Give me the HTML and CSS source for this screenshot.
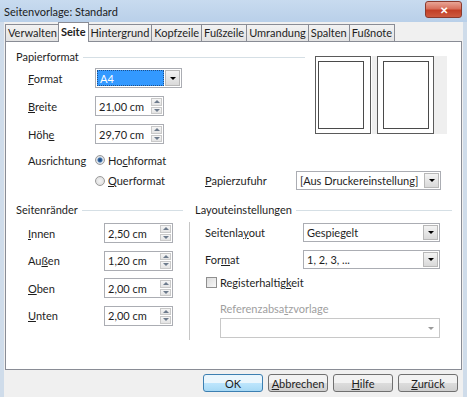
FILE: index.html
```html
<!DOCTYPE html>
<html lang="de">
<head>
    <meta charset="UTF-8">
    <meta name="viewport" content="width=device-width, initial-scale=1.0">
    <title>Seitenvorlage: Standard</title>
    <link rel="stylesheet" href="styles.css">
</head>
<body>
<div class="window">
    <div class="titlebar">
        <span class="title">Seitenvorlage: Standard</span>
        <span class="close">&#10005;</span>
    </div>
    <div class="client">
        <div class="tabs">
            <div class="tab">Verwalten</div>
            <div class="tab active">Seite</div>
            <div class="tab">Hintergrund</div>
            <div class="tab">Kopfzeile</div>
            <div class="tab">Fußzeile</div>
            <div class="tab">Umrandung</div>
            <div class="tab">Spalten</div>
            <div class="tab">Fußnote</div>
        </div>
        <div class="panel">
            <div class="top">
                <div class="paper">
                    <div class="group-head"><span>Papierformat</span></div>
                    <div class="row r1">
                        <span class="lbl"><u>F</u>ormat</span>
                        <div class="select focus w87"><span class="val">A4</span><span class="drop"></span></div>
                    </div>
                    <div class="row">
                        <span class="lbl"><u>B</u>reite</span>
                        <div class="spin"><span class="val">21,00 cm</span><span class="spin-btn"><i class="up"></i><i class="down"></i></span></div>
                    </div>
                    <div class="row">
                        <span class="lbl">Höh<u>e</u></span>
                        <div class="spin"><span class="val">29,70 cm</span><span class="spin-btn"><i class="up"></i><i class="down"></i></span></div>
                    </div>
                    <div class="row small">
                        <span class="lbl">Ausrichtung</span>
                        <span class="radio on"></span><span>Ho<u>c</u>hformat</span>
                    </div>
                </div>
                <div class="preview">
                    <div class="page left"><div class="area"></div></div>
                    <div class="page right"><div class="area"></div></div>
                </div>
            </div>
            <div class="row quer">
                <span class="lbl"></span>
                <span class="radio-cell"><span class="radio"></span><span><u>Q</u>uerformat</span></span>
                <span class="lbl2"><u>P</u>apierzufuhr</span>
                <div class="select w145"><span class="val">[Aus Druckereinstellung]</span><span class="drop"></span></div>
            </div>
            <div class="heads">
                <div class="group-head margins-head"><span>Seitenränder</span></div>
                <div class="group-head layout-head"><span>Layouteinstellungen</span></div>
            </div>
            <div class="bottom">
                <div class="margins">
                    <div class="row">
                        <span class="lbl wide"><u>I</u>nnen</span>
                        <div class="spin"><span class="val">2,50 cm</span><span class="spin-btn"><i class="up"></i><i class="down"></i></span></div>
                    </div>
                    <div class="row">
                        <span class="lbl wide">Au<u>ß</u>en</span>
                        <div class="spin"><span class="val">1,20 cm</span><span class="spin-btn"><i class="up"></i><i class="down"></i></span></div>
                    </div>
                    <div class="row">
                        <span class="lbl wide"><u>O</u>ben</span>
                        <div class="spin"><span class="val">2,00 cm</span><span class="spin-btn"><i class="up"></i><i class="down"></i></span></div>
                    </div>
                    <div class="row">
                        <span class="lbl wide"><u>U</u>nten</span>
                        <div class="spin"><span class="val">2,00 cm</span><span class="spin-btn"><i class="up"></i><i class="down"></i></span></div>
                    </div>
                </div>
                <div class="sep"></div>
                <div class="layout">
                    <div class="row">
                        <span class="lbl3">Seitenla<u>y</u>out</span>
                        <div class="select w137"><span class="val">Gespiegelt</span><span class="drop"></span></div>
                    </div>
                    <div class="row">
                        <span class="lbl3">For<u>m</u>at</span>
                        <div class="select w137"><span class="val">1, 2, 3, ...</span><span class="drop"></span></div>
                    </div>
                    <div class="check-row">
                        <span class="check"></span><span>Registerhaltig<u>k</u>eit</span>
                    </div>
                    <div class="ref">
                        <div class="ref-label">Referenzabsa<u>t</u>zvorlage</div>
                        <div class="select disabled w220"><span class="val"></span><span class="drop"></span></div>
                    </div>
                </div>
            </div>
        </div>
        <div class="buttons">
            <button class="btn default">OK</button>
            <button class="btn"><u>A</u>bbrechen</button>
            <button class="btn"><u>H</u>ilfe</button>
            <button class="btn"><u>Z</u>urück</button>
        </div>
    </div>
</div>
</body>
</html>
```

FILE: styles.css
```css
body{
    margin: 0;
    padding: 0;
    font-family: Lato, "Liberation Sans", sans-serif;
    font-size: 11px;
    color: #1e1e1e;
    background-color: #cfdcea;
}
u{
    text-decoration: underline;
    text-underline-offset: 1px;
}
.window{
    width: 467px;
    height: 397px;
    display: flex;
    flex-direction: column;
    overflow: hidden;
}
.titlebar{
    height: 22px;
    display: flex;
    align-items: center;
    justify-content: space-between;
    padding-left: 4px;
    padding-right: 5px;
    background: linear-gradient(#c8dbef, #b9d0e9);
}
.title{
    font-size: 11px;
    color: #1b1b1b;
}
.close{
    width: 35px;
    height: 15px;
    border: 1px solid #8a3a2e;
    border-radius: 3px;
    background: linear-gradient(#e8a596, #d8705c 45%, #c23f26 55%, #cd5a3f);
    color: #fff;
    font-size: 10px;
    font-weight: bold;
    display: flex;
    align-items: center;
    justify-content: center;
    margin-top: -3px;
}
.client{
    flex: 1;
    margin: 0 4px;
    background-color: #f0f0f0;
    display: flex;
    flex-direction: column;
}
.tabs{
    height: 19px;
    display: flex;
    align-items: flex-end;
    padding-left: 1px;
}
.tab{
    height: 16px;
    line-height: 16px;
    padding: 0 2px;
    border: 1px solid #898c95;
    border-bottom: none;
    margin-right: -1px;
    background: linear-gradient(#f2f2f2, #e3e3e3);
}
.tab.active{
    height: 19px;
    line-height: 18px;
    background: #fff;
    font-weight: bold;
    margin: 0 -1px -1px -1px;
    position: relative;
    z-index: 1;
}
.panel{
    height: 327px;
    margin: 0 1px;
    border: 1px solid #898c95;
    background: #fff;
}
.top{
    display: flex;
    align-items: flex-start;
}
.paper{
    width: 299px;
    padding-top: 9px;
}
.group-head{
    height: 12px;
    line-height: 12px;
    display: flex;
    align-items: center;
    padding-left: 10px;
}
.group-head::after{
    content: "";
    flex: 1;
    border-top: 1px solid #d5dfe5;
    margin-left: 4px;
}
.row{
    display: flex;
    align-items: center;
    height: 20px;
    margin-top: 8px;
}
.r1{
    margin-top: 5px;
}
.row.small{
    height: 14px;
    margin-top: 9px;
}
.lbl{
    width: 67px;
    padding-left: 22px;
}
.lbl.wide{
    width: 76px;
}
.lbl2{
    width: 91px;
}
.lbl3{
    width: 98px;
}
.radio-cell{
    width: 110px;
    display: flex;
    align-items: center;
}
.radio{
    width: 10px;
    height: 10px;
    border-radius: 50%;
    border: 1px solid #9a9a9a;
    background: radial-gradient(#f4f4f4, #d9d9d9);
    margin-right: 3px;
    box-sizing: border-box;
}
.radio.on{
    background: radial-gradient(circle, #1a3d6e 0, #3a6ea8 2px, #dfe6ee 3px, #d2d2d2 5px);
}
.select, .spin{
    height: 20px;
    box-sizing: border-box;
    border: 1px solid #abadb3;
    background: #fff;
    display: flex;
    align-items: stretch;
}
.select .val, .spin .val{
    flex: 1;
    padding-left: 3px;
    display: flex;
    align-items: center;
    white-space: nowrap;
    overflow: hidden;
}
.w87{ width: 87px; }
.w137{ width: 137px; height: 19px; }
.w145{ width: 145px; height: 19px; }
.w220{ width: 220px; }
.select.focus .val{
    background: #3399ff;
    color: #fff;
    outline: 1px dotted #1d4f8a;
    outline-offset: -1px;
    margin: 1px 0 1px 1px;
}
.drop{
    width: 13px;
    margin: 1px;
    border: 1px solid #b8b8b8;
    background: linear-gradient(#f3f3f3, #d9d9d9);
    display: flex;
    align-items: center;
    justify-content: center;
}
.drop::after{
    content: "";
    border-left: 3px solid transparent;
    border-right: 3px solid transparent;
    border-top: 3px solid #000;
}
.select.disabled{
    border-color: #c8c8c8;
}
.select.disabled .drop{
    border-color: transparent;
    background: none;
}
.select.disabled .drop::after{
    border-top-color: #9a9a9a;
}
.spin{
    width: 69px;
}
.spin-btn{
    width: 11px;
    margin: 1px;
    display: flex;
    flex-direction: column;
    gap: 1px;
}
.spin-btn i{
    flex: 1;
    border: 1px solid #c9c9c9;
    background: linear-gradient(#f5f5f5, #e4e4e4);
    display: flex;
    align-items: center;
    justify-content: center;
}
.spin-btn .up::after{
    content: "";
    border-left: 3px solid transparent;
    border-right: 3px solid transparent;
    border-bottom: 3px solid #6d7b8c;
}
.spin-btn .down::after{
    content: "";
    border-left: 3px solid transparent;
    border-right: 3px solid transparent;
    border-top: 3px solid #6d7b8c;
}
.preview{
    display: flex;
    margin-top: 14px;
    margin-left: 10px;
    background: #efefef;
    padding-right: 13px;
}
.page{
    border: 1px solid #5a5a5a;
    background: #fff;
    display: flex;
}
.page.left{
    padding: 4px 6px 4px 2px;
    width: 46px;
    height: 68px;
    margin-right: 6px;
    box-shadow: 0 0 0 1px #fff;
}
.page.right{
    padding: 4px 4px 4px 5px;
    width: 46px;
    height: 68px;
}
.page .area{
    flex: 1;
    border: 1px solid #4a4a4a;
}
.quer{
    margin-top: 4px;
    height: 19px;
}
.heads{
    display: flex;
    margin-top: 14px;
}
.margins-head{
    width: 167px;
}
.layout-head{
    width: 257px;
    margin-left: 12px;
    padding-left: 0;
}
.bottom{
    display: flex;
    margin-top: 6px;
    align-items: flex-start;
}
.margins{
    width: 177px;
    padding-top: 1px;
}
.margins .row:first-child, .layout .row:first-child{
    margin-top: 0;
}
.margins .row{
    margin-top: 7.5px;
}
.sep{
    width: 1px;
    height: 118px;
    background: #c6c6c6;
    margin-left: 6px;
}
.layout{
    margin-left: 5px;
    padding-left: 10px;
    padding-top: 1px;
}
.layout .row{
    height: 19px;
}
.check-row{
    display: flex;
    align-items: center;
    height: 12px;
    margin-top: 7px;
}
.check{
    width: 11px;
    height: 11px;
    box-sizing: border-box;
    border: 1px solid #8f8f8f;
    background: linear-gradient(135deg, #dcdcdc, #f8f8f8);
    margin: 0 3px 0 1px;
}
.ref{
    margin-left: 15px;
    margin-top: 15px;
}
.ref-label{
    height: 12px;
    line-height: 12px;
    color: #a0a0a0;
    margin-bottom: 3px;
}
.buttons{
    display: flex;
    justify-content: flex-end;
    gap: 5px;
    padding: 4px 5px 0 0;
}
.btn{
    width: 60px;
    height: 18px;
    padding: 0;
    font-family: inherit;
    font-size: 11px;
    color: #1e1e1e;
    border: 1px solid #707070;
    border-radius: 3px;
    background: linear-gradient(#f2f2f2 50%, #dddddd 50%, #cfcfcf);
}
.btn.default{
    border-color: #3c7fb1;
    background: linear-gradient(#eaf6fd 50%, #bee6fd 50%, #a7d9f5);
}
```
